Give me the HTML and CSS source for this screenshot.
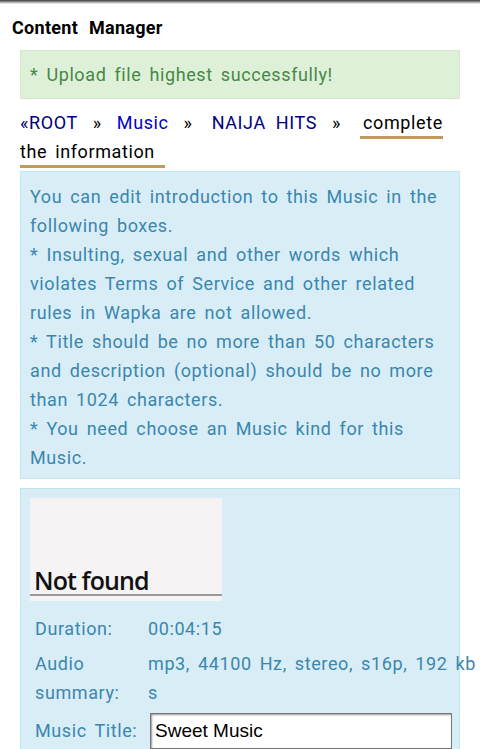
FILE: index.html
```html
<!DOCTYPE html>
<html lang="en">
<head>
    <meta charset="UTF-8">
    <meta name="viewport" content="width=device-width, initial-scale=1.0">
    <title>Content Manager</title>
    <link rel="stylesheet" href="styles.css">
</head>
<body>
    <div class="topbar"></div>
    <h1 class="title">Content Manager</h1>
    <div class="content">
        <div class="alert alert-success">* Upload file highest successfully!</div>

        <div class="nav">
            <a href="#" class="root">&laquo;ROOT</a><span class="sep">&raquo;</span><a href="#" class="cat">Music</a><span class="sep wide">&raquo;</span><a href="#" class="root spaced">NAIJA HITS</a><span class="sep wide">&raquo;</span><span class="current">complete the information</span>
        </div>

        <div class="alert alert-info notes">
            You can edit introduction to this Music in the following boxes.<br>
            * Insulting, sexual and other words which violates Terms of Service and other related rules in Wapka are not allowed.<br>
            * Title should be no more than 50 characters and description (optional) should be no more than 1024 characters.<br>
            * You need choose an Music kind for this Music.
        </div>

        <div class="alert alert-info form-box">
            <div class="cover">
                <span class="cover-text">Not found</span>
            </div>
            <table class="info-table">
                <tr>
                    <td class="label">Duration:</td>
                    <td>00:04:15</td>
                </tr>
                <tr>
                    <td class="label">Audio summary:</td>
                    <td>mp3, 44100 Hz, stereo, s16p, 192 kb s</td>
                </tr>
                <tr>
                    <td class="label field-label">Music Title:</td>
                    <td><input type="text" class="field" value="Sweet Music"></td>
                </tr>
            </table>
        </div>
    </div>
</body>
</html>
```

FILE: styles.css
```css
body {
    margin: 0;
    background: #fff;
    font-family: Roboto, "Noto Sans", sans-serif;
    font-size: 18px;
    line-height: 29px;
    letter-spacing: 0.6px;
    word-spacing: 3px;
    color: #000;
    overflow: hidden;
}
.topbar {
    height: 4px;
    background: linear-gradient(#3a3a3a, #9a9a9a 50%, #fff);
}
.title {
    margin: 0;
    padding: 10px 12px 8px;
    font-size: 18px;
    font-weight: bold;
    line-height: 28px;
    letter-spacing: 0.3px;
    word-spacing: 6px;
}
.content {
    margin: 0 20px;
}
.alert {
    padding: 9px;
    border: 1px solid;
    margin-bottom: 9px;
}
.alert-success {
    background: #dff0d8;
    border-color: #d6e9c6;
    color: #468847;
}
.alert-info {
    background: #d9edf7;
    border-color: #bce8f1;
    color: #3a87ad;
}
.notes {
    padding: 10px 9px 6px;
}
.form-box {
    padding-top: 9px;
}
.nav {
    margin: 0 0 5px;
}
.nav a {
    text-decoration: none;
}
.root {
    color: #000080;
}
.cat {
    color: #0000cc;
}
.spaced {
    word-spacing: 5px;
}
.sep {
    margin: 0 15px;
    color: #000;
}
.sep.wide {
    margin-right: 19px;
}
.current {
    padding: 0 10px 3px 3px;
    border-bottom: 3px solid #c29a5c;
}
.cover {
    width: 192px;
    height: 103px;
    background: #f6f3f5;
    display: flex;
    align-items: flex-end;
    box-sizing: border-box;
    padding-bottom: 5px;
    margin-bottom: 10px;
    letter-spacing: 0;
    word-spacing: 0;
}
.cover-text {
    flex: 1;
    padding-left: 4px;
    border-bottom: 2px solid #9a9a9a;
    font-family: "Open Sans", sans-serif;
    font-size: 25px;
    font-weight: 600;
    line-height: 28px;
    letter-spacing: -0.9px;
    color: #111;
}
.info-table {
    border-collapse: collapse;
    width: 460px;
}
.info-table td {
    padding: 3px 5px;
    vertical-align: top;
}
.info-table .field-label {
    padding-top: 6px;
}
.label {
    width: 103px;
}
.field {
    width: 302px;
    height: 36px;
    box-sizing: border-box;
    margin: 0 0 0 2px;
    padding: 2px 4px;
    border: 1px solid #777;
    box-shadow: inset 1px 1px 2px #999;
    font-family: "Liberation Sans", Arial, sans-serif;
    font-size: 19px;
    color: #000;
    letter-spacing: 0;
    word-spacing: 0;
}
```
